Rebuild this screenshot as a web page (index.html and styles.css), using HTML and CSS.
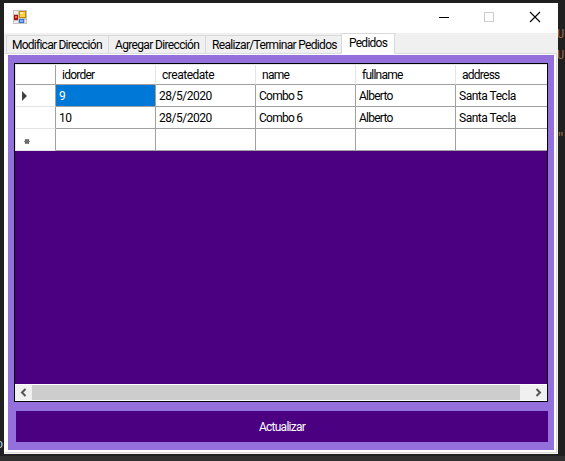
FILE: index.html
```html
<!DOCTYPE html>
<html lang="es">
<head>
<meta charset="utf-8">
<title>Pedidos</title>
<link rel="stylesheet" href="styles.css">
</head>
<body>
<div class="behind b1">U</div><div class="behind b2">U</div><div class="behind b3">"</div><div class="behind b4">o</div>
<main class="window">
  <header class="titlebar">
    <svg class="appicon" width="15" height="15" viewBox="0 0 15 15" shape-rendering="crispEdges">
      <path fill="#c2c2c2" d="M0 0h14v14H0z"/><path fill="#eee" d="M1 1h4v3H1zM1 11h4v2H1zM12 10h1v3h-1z"/>
      <path fill="#a8170c" d="M1 5h4v5H1z"/><path fill="#ed6a5c" d="M2 6h2v2H2z"/>
      <path fill="#c68a00" d="M6 1h7v7H6z"/><path fill="#ffd34d" d="M7 2h5v5H7z"/><path fill="#ffeb9a" d="M7 2h3v2H7z"/>
      <path fill="#3a70d0" d="M6 9h5v4H6z"/><path fill="#80b4ff" d="M7 10h3v2H7z"/>
    </svg>
    <svg class="controls" width="130" height="30" viewBox="0 0 130 30">
      <path d="M11 14.5h10" stroke="#000"/><rect x="56.5" y="9.5" width="9" height="9" fill="none" stroke="#ccc"/>
      <path d="M102 9l10 10m0-10l-10 10" stroke="#000" stroke-width="1.1"/>
    </svg>
  </header>
  <nav class="tabs">
    <div class="tab t1"><span>Modificar Dirección</span></div>
    <div class="tab t2"><span>Agregar Dirección</span></div>
    <div class="tab t3"><span>Realizar/Terminar Pedidos</span></div>
    <div class="tab active"><span>Pedidos</span></div>
  </nav>
  <section class="page">
    <div class="panel">
      <div class="view">
        <div class="grid">
          <div class="row head"><div></div><div>idorder</div><div class="wide">createdate</div><div>name</div><div>fullname</div><div>address</div></div>
          <div class="row"><div><svg width="39" height="21"><path d="M6 6v10l5-5z" fill="#444"/></svg></div><div class="selected">9</div><div class="wide">28/5/2020</div><div>Combo 5</div><div>Alberto</div><div class="wide">Santa Tecla</div></div>
          <div class="row"><div></div><div class="wide">10</div><div class="wide">28/5/2020</div><div>Combo 6</div><div>Alberto</div><div class="wide">Santa Tecla</div></div>
          <div class="row"><div><svg width="39" height="21"><circle cx="11" cy="12.500" r="2.300" fill="#444"/><path d="M8 12.500h6M9 10l4 5m0-5l-4 5" stroke="#777"/></svg></div><div></div><div></div><div></div><div></div><div></div></div>
        </div>
        <div class="scroll">
          <svg width="17" height="15"><path d="M10.500 4L7 7.500l3.500 3.500" fill="none" stroke="#555" stroke-width="2"/></svg>
          <div class="thumb"></div>
          <svg class="next" width="17" height="15"><path d="M6.500 4L10 7.500 6.500 11" fill="none" stroke="#555" stroke-width="2"/></svg>
        </div>
      </div>
      <button class="update">Actualizar</button>
    </div>
  </section>
</main>
</body>
</html>
```
FILE: styles.css
```css
* { box-sizing: border-box; }
body { margin: 0; width: 565px; height: 461px; overflow: hidden; padding: 3px 0 0 4px; position: relative;
  background: linear-gradient(#202020 0 456px, #303030 456px);
  font: 12px/15px Roboto, "Liberation Sans", sans-serif; letter-spacing: -0.75px; color: #000; }
.behind { position: absolute; font: 12px/12px "Liberation Mono", monospace; color: #a36b42; }
.b1 { left: 557px; top: 29px; }
.b2 { left: 557px; top: 50px; }
.b3 { left: 557px; top: 132px; }
.b4 { left: -4px; top: 439px; color: #c5d5e5; }
.window { position: relative; width: 554px; height: 451px; background: #f0f0f0; display: flex; flex-direction: column; }
.titlebar { height: 30px; background: #fff; display: flex; justify-content: space-between; padding-left: 9px; }
.appicon { margin-top: 7px; }
.tabs { height: 20px; display: flex; padding-left: 2px; align-items: flex-end; }
.tab { height: 18px; border: 1px solid #d9d9d9; border-width: 1px 0 0 1px; padding: 2px 0 0 5px; white-space: nowrap; }
.t1 { width: 102px; }
.t2 { width: 97px; padding-left: 6px; letter-spacing: -0.65px; }
.t3 { width: 136px; padding-left: 6px; letter-spacing: -0.67px; }
.active { width: 54px; height: 21px; margin-bottom: -1px; background: #fff; border-right-width: 1px; padding: 2px 0 0 7px; position: relative; }
.page { height: 400px; width: 553px; border: 1px solid #dcdcdc; border-left-color: #fff; background: #fff; padding: 1px 2px 2px 3px; }
.panel { width: 546px; height: 395px; background: #9370db; padding: 8px 6px; }
.view { width: 534px; height: 339px; border: 1px solid #000; background: #4b0082; display: flex; flex-direction: column; justify-content: space-between; }
.grid { background: #fff; border-top: 1px solid #e5e5e5; border-left: 1px solid #e5e5e5; }
.row { display: grid; grid-template-columns: 40px 100px 100px 100px 100px 91px; height: 22px; }
.row > div { border-right: 1px solid #a0a0a0; border-bottom: 1px solid #a0a0a0; padding: 4px 0 0 3px; overflow: hidden; white-space: nowrap; }
.row > div:first-child { padding: 0; border-bottom-color: #e3e3e3; }
.row > div:last-child { border-right: 0; }
.row.head { height: 20px; }
.row.head > div { padding: 3px 0 0 6px; border-right-color: #e5e5e5; }
.row.head > div:first-child { border-color: #a0a0a0; }
.row > .wide { letter-spacing: -0.48px; }
.row > .selected { background: #0078d7; color: #fff; }
svg { display: block; }
.scroll { height: 17px; background: #f0f0f0; border-top: 1px solid #fff; border-bottom: 1px solid #fff; display: flex; }
.thumb { width: 488px; background: #cdcdcd; }
.next { margin-left: auto; }
.update { display: block; width: 532px; height: 31px; margin: 9px 0 0 2px; padding: 2px 0 0; border: 0; background: #4b0082; color: #fff; font: inherit; letter-spacing: inherit; }
```
